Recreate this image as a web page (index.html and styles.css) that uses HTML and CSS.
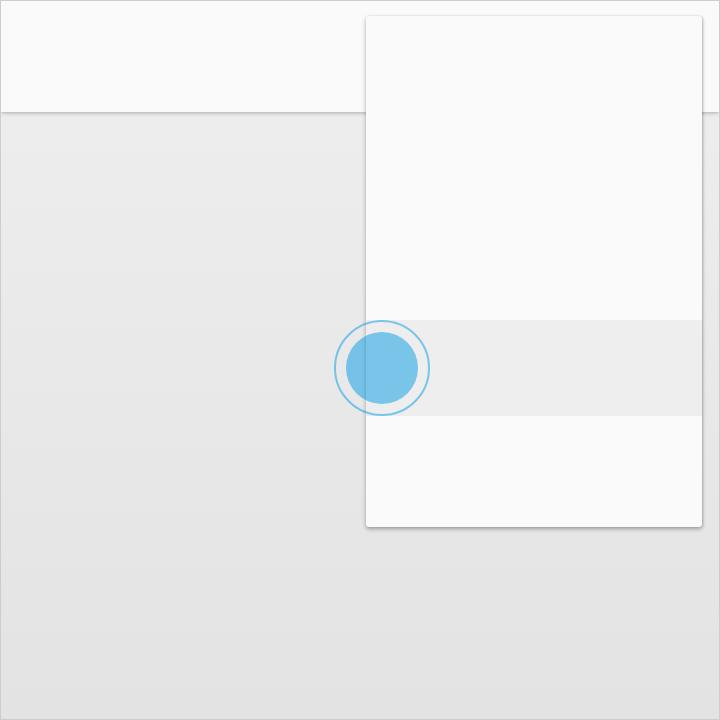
FILE: index.html
```html
<!DOCTYPE html>
<html>
<head>
<meta charset="utf-8">
<link rel="stylesheet" href="styles.css">
</head>
<body>
<div class="screen">
  <header class="appbar"></header>
  <main class="content"></main>
  <div class="menu">
    <div class="menu-top"></div>
    <div class="menu-item active"></div>
    <div class="menu-bottom"></div>
  </div>
  <div class="ripple-ring"></div>
  <div class="ripple-dot"></div>
</div>
</body>
</html>
```
FILE: styles.css
```css
html, body {
  margin: 0;
  padding: 0;
}
.screen {
  position: relative;
  width: 720px;
  height: 720px;
  box-sizing: border-box;
  border: 1px solid #cdcdcd;
  background: linear-gradient(to bottom, #efefef 0%, #e3e3e3 100%);
  display: flex;
  flex-direction: column;
  overflow: hidden;
}
.appbar {
  height: 111px;
  flex: 0 0 auto;
  background: #fafafa;
  box-shadow: 0 1px 4px rgba(0,0,0,0.28);
  position: relative;
  z-index: 1;
}
.content {
  flex: 1;
}
.menu {
  position: absolute;
  left: 365px;
  top: 15px;
  width: 336px;
  height: 511px;
  background: #fafafa;
  border-radius: 3px;
  box-shadow: 0 2px 4px rgba(0,0,0,0.32), 1px 0 2px rgba(0,0,0,0.12);
  z-index: 2;
  display: flex;
  flex-direction: column;
  overflow: hidden;
}
.menu-top {
  height: 304px;
}
.menu-item {
  height: 96px;
}
.menu-item.active {
  background: #eeeeee;
}
.menu-bottom {
  flex: 1;
}
.ripple-ring {
  position: absolute;
  left: 333px;
  top: 319px;
  width: 96px;
  height: 96px;
  box-sizing: border-box;
  border: 2px solid rgba(3,155,229,0.5);
  border-radius: 50%;
  z-index: 3;
}
.ripple-dot {
  position: absolute;
  left: 345px;
  top: 331px;
  width: 72px;
  height: 72px;
  border-radius: 50%;
  background: rgba(3,155,229,0.5);
  z-index: 3;
}
```
